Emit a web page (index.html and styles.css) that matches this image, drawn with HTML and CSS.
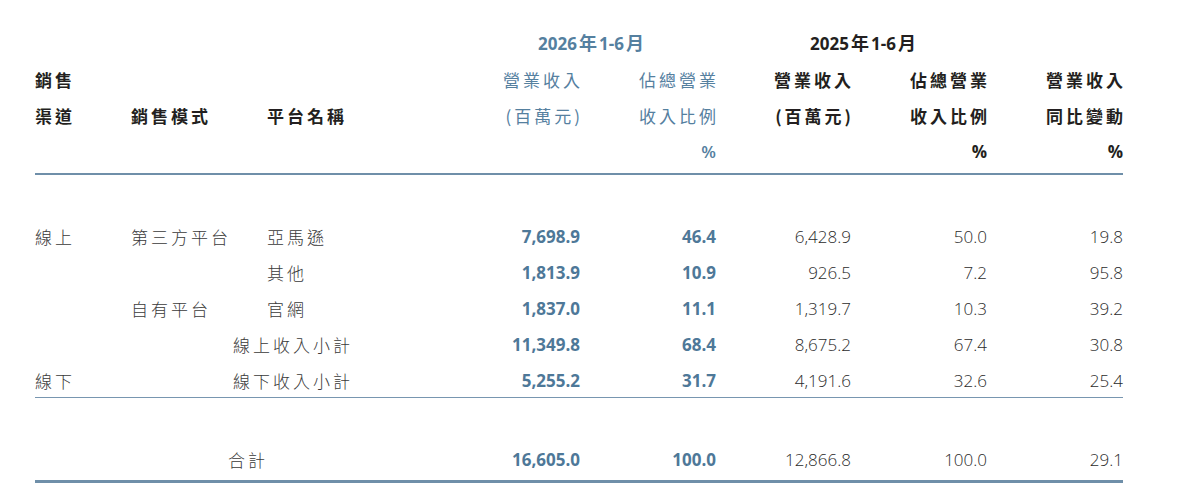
FILE: index.html
```html
<!DOCTYPE html>
<html lang="zh-Hant">
<head>
<meta charset="utf-8">
<title>銷售渠道收入</title>
<link rel="stylesheet" href="styles.css">
</head>
<body>
<table class="fin">
  <colgroup>
    <col class="c-ch"><col class="c-mode"><col class="c-plat">
    <col class="c-num"><col class="c-num"><col class="c-num2"><col class="c-num"><col class="c-num">
  </colgroup>
  <thead>
    <tr class="hrow">
      <th colspan="3"></th>
      <th colspan="2" class="year cur"><span>2026</span><span class="cj">年</span><span>1-6</span><span class="cj">月</span></th>
      <th colspan="2" class="year prev"><span>2025</span><span class="cj">年</span><span>1-6</span><span class="cj">月</span></th>
      <th></th>
    </tr>
    <tr class="hrow">
      <th class="lab"><span class="ls">銷售</span></th>
      <th></th>
      <th></th>
      <th class="r cur"><span class="ls">營業收入</span></th>
      <th class="r cur"><span class="ls">佔總營業</span></th>
      <th class="r"><span class="ls">營業收入</span></th>
      <th class="r"><span class="ls">佔總營業</span></th>
      <th class="r"><span class="ls">營業收入</span></th>
    </tr>
    <tr class="hrow">
      <th class="lab"><span class="ls">渠道</span></th>
      <th class="lab"><span class="ls">銷售模式</span></th>
      <th class="lab"><span class="ls">平台名稱</span></th>
      <th class="r cur"><span class="ls">(百萬元)</span></th>
      <th class="r cur"><span class="ls">收入比例</span></th>
      <th class="r"><span class="ls">(百萬元)</span></th>
      <th class="r"><span class="ls">收入比例</span></th>
      <th class="r"><span class="ls">同比變動</span></th>
    </tr>
    <tr class="hrow hlast">
      <th></th><th></th><th></th>
      <th></th>
      <th class="r cur pct">%</th>
      <th></th>
      <th class="r pct">%</th>
      <th class="r pct">%</th>
    </tr>
  </thead>
  <tbody>
    <tr class="drow first">
      <td class="lab"><span class="ls">線上</span></td>
      <td class="lab"><span class="ls">第三方平台</span></td>
      <td class="lab"><span class="ls">亞馬遜</span></td>
      <td class="n cur">7,698.9</td>
      <td class="n cur">46.4</td>
      <td class="n">6,428.9</td>
      <td class="n">50.0</td>
      <td class="n">19.8</td>
    </tr>
    <tr class="drow">
      <td></td>
      <td></td>
      <td class="lab"><span class="ls">其他</span></td>
      <td class="n cur">1,813.9</td>
      <td class="n cur">10.9</td>
      <td class="n">926.5</td>
      <td class="n">7.2</td>
      <td class="n">95.8</td>
    </tr>
    <tr class="drow">
      <td></td>
      <td class="lab"><span class="ls">自有平台</span></td>
      <td class="lab"><span class="ls">官網</span></td>
      <td class="n cur">1,837.0</td>
      <td class="n cur">11.1</td>
      <td class="n">1,319.7</td>
      <td class="n">10.3</td>
      <td class="n">39.2</td>
    </tr>
    <tr class="drow">
      <td></td>
      <td colspan="2" class="lab sub"><span class="ls">線上收入小計</span></td>
      <td class="n cur">11,349.8</td>
      <td class="n cur">68.4</td>
      <td class="n">8,675.2</td>
      <td class="n">67.4</td>
      <td class="n">30.8</td>
    </tr>
    <tr class="drow dlast">
      <td class="lab"><span class="ls">線下</span></td>
      <td colspan="2" class="lab sub"><span class="ls">線下收入小計</span></td>
      <td class="n cur">5,255.2</td>
      <td class="n cur">31.7</td>
      <td class="n">4,191.6</td>
      <td class="n">32.6</td>
      <td class="n">25.4</td>
    </tr>
    <tr class="drow total">
      <td></td>
      <td colspan="2" class="lab tot"><span class="ls">合計</span></td>
      <td class="n cur">16,605.0</td>
      <td class="n cur">100.0</td>
      <td class="n">12,866.8</td>
      <td class="n">100.0</td>
      <td class="n">29.1</td>
    </tr>
  </tbody>
</table>
</body>
</html>
```

FILE: styles.css
```css
html, body {
  margin: 0;
  padding: 0;
  background: #ffffff;
}

body {
  font-family: "Noto Sans CJK TC", "Noto Sans", sans-serif;
  color: #231f20;
}

.fin {
  table-layout: fixed;
  width: 1088px;
  margin: 24px 0 0 35px;
  border-collapse: collapse;
  border-spacing: 0;
}

.c-ch { width: 96px; }
.c-mode { width: 136px; }
.c-plat { width: 177px; }
.c-num { width: 136px; }
.c-num2 { width: 135px; }

th, td {
  padding: 2px 0;
  line-height: 32px;
  white-space: nowrap;
  vertical-align: middle;
  text-align: left;
}

.ls {
  letter-spacing: 3px;
}

.r .ls {
  margin-right: -3px;
}

/* header */
.hrow th {
  font-size: 17px;
  font-weight: 700;
  color: #231f20;
}

.hrow th.cur {
  color: #55809f;
  font-weight: 400;
}

.hrow .r {
  text-align: right;
}

.year {
  text-align: center;
  font-family: "Open Sans", "Noto Sans CJK TC", sans-serif;
  font-size: 20px;
  font-weight: 700;
}

.year .cj {
  font-family: "Noto Sans CJK TC", sans-serif;
  font-size: 18px;
  margin: 0 2px;
}

.hrow th.year.cur {
  color: #55809f;
  font-weight: 700;
  padding-left: 24px;
}

.year.prev {
  padding-left: 25px;
}

.pct {
  font-family: "Open Sans", sans-serif;
  font-size: 19px;
}

.hrow th.pct {
  font-weight: 700;
}

.hrow th.pct.cur {
  font-weight: 600;
}

.hlast th {
  padding-bottom: 5px;
  border-bottom: 2px solid #6f8fa9;
}

/* body */
.drow td {
  font-size: 17px;
}

.drow .lab {
  font-weight: 300;
  color: #3a3a3a;
}

.sub {
  padding-left: 102px;
}

.tot {
  padding-left: 97px;
}

.n {
  text-align: right;
  font-family: "Open Sans", sans-serif;
  font-size: 21px;
  font-weight: 300;
  color: #2b2b2b;
}

.n.cur {
  font-weight: 700;
  color: #4e7898;
}

.first td {
  padding-top: 46px;
}

.dlast td {
  padding-bottom: 0;
  border-bottom: 1px solid #7896b0;
}

.total td {
  padding-top: 46px;
  padding-bottom: 4px;
  border-bottom: 3px solid #6f8fa9;
}
```
